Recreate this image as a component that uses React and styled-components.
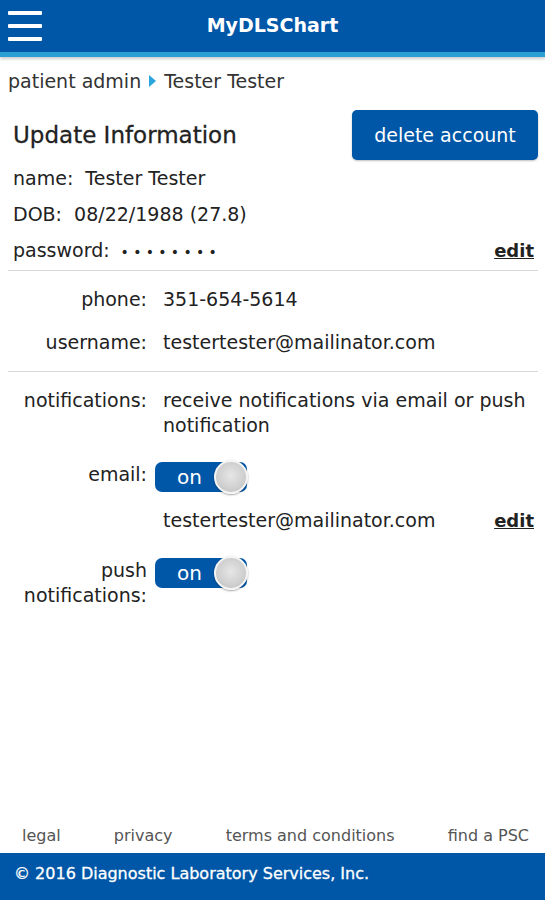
import React from 'react';
import styled, { createGlobalStyle } from 'styled-components';

const GlobalStyle = createGlobalStyle`
  html, body {
    margin: 0;
    padding: 0;
    background: #fff;
  }
  body {
    font-family: 'DejaVu Sans', Verdana, sans-serif;
    color: #222;
  }
`;

const Page = styled.div`
  min-height: 100vh;
  display: flex;
  flex-direction: column;
`;

const Header = styled.header`
  position: relative;
  height: 52px;
  background: #0057a8;
  border-bottom: 5px solid #2a9fd4;
  box-shadow: 0 2px 3px rgba(0, 0, 0, 0.2);
  display: flex;
  align-items: center;
  justify-content: center;
`;

const Burger = styled.button`
  position: absolute;
  left: 8px;
  top: 11px;
  width: 34px;
  height: 30px;
  padding: 0;
  border: 0;
  background: transparent;
  display: flex;
  flex-direction: column;
  justify-content: space-between;
  span {
    display: block;
    height: 4px;
    background: #fff;
    border-radius: 1px;
  }
`;

const Title = styled.h1`
  margin: 0 0 2px 0;
  font-size: 19px;
  font-weight: bold;
  color: #fff;
`;

const Crumbs = styled.nav`
  display: flex;
  align-items: center;
  gap: 8px;
  padding: 11px 8px 0;
  font-size: 19px;
  color: #333;
  height: 26px;
`;

const Caret = styled.span`
  width: 0;
  height: 0;
  border-top: 6px solid transparent;
  border-bottom: 6px solid transparent;
  border-left: 7px solid #2aa4dc;
`;

const Content = styled.main`
  flex: 1;
  padding: 0 7px 0 8px;
`;

const TopRow = styled.div`
  display: flex;
  justify-content: space-between;
  align-items: center;
  padding: 16px 0 0 5px;
`;

const Heading = styled.h2`
  margin: 0;
  font-size: 23px;
  font-weight: normal;
  -webkit-text-stroke: 0.3px #222;
  color: #222;
`;

const DeleteButton = styled.button`
  width: 186px;
  height: 50px;
  border: 0;
  border-radius: 5px;
  background: #0057a8;
  color: #fff;
  font-family: inherit;
  font-size: 19px;
  box-shadow: 0 1px 2px rgba(0, 0, 0, 0.25);
`;

const InfoLine = styled.div`
  display: flex;
  justify-content: space-between;
  align-items: baseline;
  padding-left: 5px;
  height: 36px;
  line-height: 36px;
  font-size: 19px;
  color: #222;
  &:first-of-type {
    margin-top: 2px;
  }
`;

const Dots = styled.span`
  letter-spacing: 4.3px;
  margin-left: 11px;
  font-size: 14px;
`;

const EditLink = styled.a`
  font-weight: bold;
  color: #222;
  text-decoration: underline;
  font-size: 18px;
  margin-right: 4px;
`;

const Divider = styled.hr`
  margin: ${(p) => p.$top || 0}px 0 0;
  border: 0;
  border-top: 1px solid #d8d8d8;
`;

const Grid = styled.div`
  display: grid;
  grid-template-columns: 139px 1fr;
  column-gap: 16px;
  padding-top: ${(p) => p.$top}px;
  font-size: 19px;
  line-height: 25px;
  color: #222;
`;

const Label = styled.div`
  text-align: right;
  margin-bottom: ${(p) => p.$gap || 0}px;
`;

const Value = styled.div`
  display: flex;
  justify-content: space-between;
  align-items: flex-start;
  margin-bottom: ${(p) => p.$gap || 0}px;
`;

const Toggle = styled.div`
  position: relative;
  width: 92px;
  height: 30px;
  border-radius: 7px;
  background: #0057a8;
  color: #fff;
  font-size: 20px;
  line-height: 30px;
  padding-left: 22px;
  box-sizing: border-box;
  margin: 0 0 0 -8px;
`;

const Knob = styled.span`
  position: absolute;
  right: -1px;
  top: -2px;
  width: 30px;
  height: 30px;
  border-radius: 50%;
  border: 2px solid #f4f4f4;
  background: radial-gradient(circle at 50% 45%, #e6e6e6 0%, #cfcfcf 60%, #b8b8b8 100%);
  box-shadow: 0 1px 2px rgba(0, 0, 0, 0.35);
`;

const FooterLinks = styled.div`
  display: flex;
  justify-content: space-between;
  padding: 0 16px 8px 22px;
  font-size: 16px;
  color: #555;
`;

const Copyright = styled.footer`
  height: 47px;
  background: #0057a8;
  color: #fff;
  font-size: 16px;
  -webkit-text-stroke: 0.3px #fff;
  padding: 11px 14px 0;
  box-sizing: border-box;
`;

function Switch() {
  return (
    <Toggle>
      on
      <Knob />
    </Toggle>
  );
}

export default function App() {
  return (
    <Page>
      <GlobalStyle />
      <Header>
        <Burger aria-label="menu">
          <span />
          <span />
          <span />
        </Burger>
        <Title>MyDLSChart</Title>
      </Header>
      <Crumbs>
        <span>patient admin</span>
        <Caret />
        <span>Tester Tester</span>
      </Crumbs>
      <Content>
        <TopRow>
          <Heading>Update Information</Heading>
          <DeleteButton>delete account</DeleteButton>
        </TopRow>
        <InfoLine>
          <span>name:&nbsp; Tester Tester</span>
        </InfoLine>
        <InfoLine>
          <span>DOB:&nbsp; 08/22/1988 (27.8)</span>
        </InfoLine>
        <InfoLine>
          <span>
            password:<Dots>••••••••</Dots>
          </span>
          <EditLink>edit</EditLink>
        </InfoLine>
        <Divider $top={2} />
        <Grid $top={16}>
          <Label $gap={18}>phone:</Label>
          <Value $gap={18}>351-654-5614</Value>
          <Label $gap={16}>username:</Label>
          <Value $gap={16}>testertester@mailinator.com</Value>
        </Grid>
        <Divider />
        <Grid $top={16}>
          <Label $gap={24}>notifications:</Label>
          <Value $gap={24}>receive notifications via email or push notification</Value>
          <Label $gap={16}>email:</Label>
          <Value $gap={16}>
            <Switch />
          </Value>
          <div />
          <Value $gap={25}>
            <span>testertester@mailinator.com</span>
            <EditLink>edit</EditLink>
          </Value>
          <Label>
            push
            <br />
            notifications:
          </Label>
          <Value>
            <Switch />
          </Value>
        </Grid>
      </Content>
      <FooterLinks>
        <span>legal</span>
        <span>privacy</span>
        <span>terms and conditions</span>
        <span>find a PSC</span>
      </FooterLinks>
      <Copyright>© 2016 Diagnostic Laboratory Services, Inc.</Copyright>
    </Page>
  );
}
